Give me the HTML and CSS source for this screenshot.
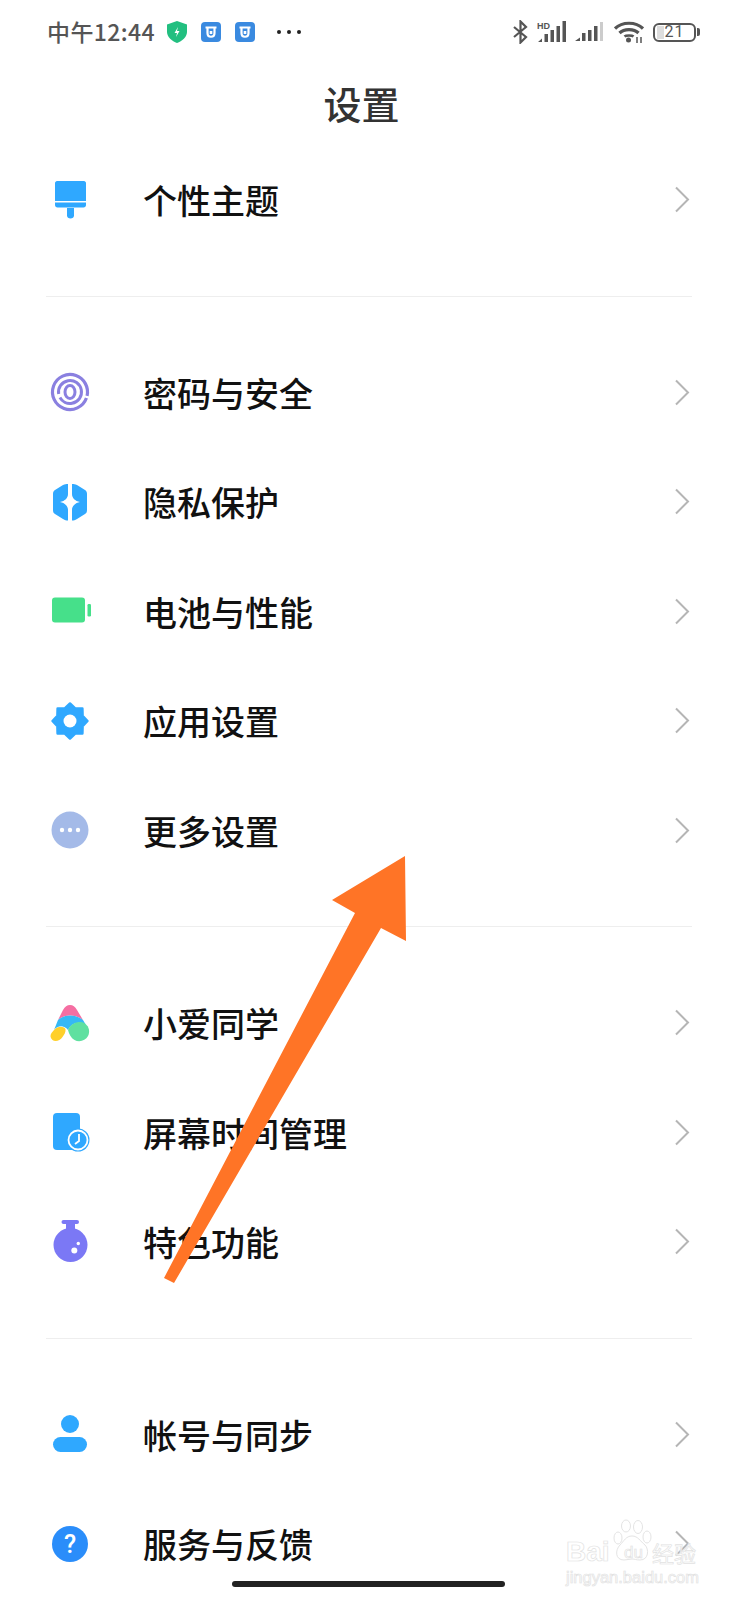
FILE: index.html
```html
<!DOCTYPE html>
<html lang="zh-CN">
<head>
    <meta charset="UTF-8">
    <meta name="viewport" content="width=device-width, initial-scale=1.0">
    <title>设置</title>
    <link rel="stylesheet" href="styles.css">
</head>
<body>
<div class="screen">

    <!-- Status bar -->
    <div class="status-bar">
        <div class="status-left">
            <span class="time">中午12:44</span>
            <svg class="shield" width="20" height="22" viewBox="0 0 20 22"><path d="M10 0L20 3.500V11C20 16 15 20 10 22C5 20 0 16 0 11V3.500Z" fill="#22bf80"/><path d="M11 6L7.500 12H10L9 16L12.500 10H10Z" fill="#fff"/></svg>
            <svg class="app-badge" width="20" height="20" viewBox="0 0 20 20"><rect width="20" height="20" rx="4" fill="#3a8ae0"/><path d="M4.500 5.500H15.500M6.500 5.500V11C6.500 16 13.500 16 13.500 11V5.500" fill="none" stroke="#fff" stroke-width="2.200"/><rect x="8.700" y="9" width="2.600" height="3" fill="#fff"/></svg>
            <svg class="app-badge" width="20" height="20" viewBox="0 0 20 20"><rect width="20" height="20" rx="4" fill="#3a8ae0"/><path d="M4.500 5.500H15.500M6.500 5.500V11C6.500 16 13.500 16 13.500 11V5.500" fill="none" stroke="#fff" stroke-width="2.200"/><rect x="8.700" y="9" width="2.600" height="3" fill="#fff"/></svg>
            <span class="status-dots"><i></i><i></i><i></i></span>
        </div>
        <div class="status-right">
            <svg width="15" height="24" viewBox="0 0 15 24"><path d="M1 7L13 17L7.500 22.500V1.500L13 7L1 17" fill="none" stroke="#555" stroke-width="2.200"/></svg>
            <svg width="29" height="22" viewBox="0 0 29 22"><path d="M1 21L5 17.500V21ZM7.500 13H11V21H7.500ZM13.500 9H17V21H13.500ZM19.500 5H23V21H19.500ZM25.500 0H29V21H25.500Z" fill="#555"/><text class="hd" x="0" y="8">HD</text></svg>
            <svg width="28" height="20" viewBox="0 0 28 20"><path d="M0 19L5 15.500V19ZM7 11H10.500V19H7ZM13 8H16.500V19H13ZM19 4H22.500V19H19Z" fill="#555"/><rect x="25" y="0" width="3" height="19" fill="#ccc"/></svg>
            <svg class="wifi" width="30" height="22" viewBox="0 0 30 22"><path d="M1 7.500C8 0.500 22 0.500 29 7.500M5.500 12C10 7.500 20 7.500 24.500 12" fill="none" stroke="#555" stroke-width="3.200"/><path d="M10.500 15.500C12 14 18 14 19.500 15.500" fill="none" stroke="#555" stroke-width="2.500"/><circle cx="14.500" cy="19" r="2.500" fill="#555"/><path d="M23 16V22M27 16V22" stroke="#555" stroke-width="1.500"/></svg>
            <div class="battery"><div class="battery-body"><span class="battery-level"></span><span class="battery-num">21</span></div><span class="battery-nub"></span></div>
        </div>
    </div>

    <h1 class="page-title">设置</h1>

    <section class="group">
        <div class="row">
            <svg class="icon" width="40" height="40" viewBox="0 0 40 40"><path d="M5 3C5 2 6 1 7 1H34C35 1 36 2 36 3V21H5Z" fill="#2fa8ff"/><path d="M5 22.500H36V25C36 26.500 35 27.500 33.500 27.500H7.500C6 27.500 5 26.500 5 25Z" fill="#2fa8ff"/><path d="M17 28H24V35.500C24 37.500 22.500 38.500 20.500 38.500C18.500 38.500 17 37.500 17 35.500Z" fill="#2fa8ff"/></svg>
            <span class="row-label">个性主题</span>
            <svg class="chevron" width="16" height="27" viewBox="0 0 16 27"><path d="M2 1.500L14 13.500L2 25.500"/></svg>
        </div>
    </section>

    <section class="group">
        <div class="row">
            <svg class="icon" width="40" height="40" viewBox="0 0 40 40"><g fill="none" stroke="#8a80e0"><circle cx="20" cy="20" r="17.500" stroke-width="3.200" stroke-dasharray="107 3" transform="rotate(20 20 20)"/><circle cx="20" cy="20" r="11.500" stroke-width="3" stroke-dasharray="68 4" transform="rotate(170 20 20)"/><ellipse cx="20" cy="20" rx="5" ry="6.500" stroke-width="3"/></g></svg>
            <span class="row-label">密码与安全</span>
            <svg class="chevron" width="16" height="27" viewBox="0 0 16 27"><path d="M2 1.500L14 13.500L2 25.500"/></svg>
        </div>
        <div class="row">
            <svg class="icon" width="40" height="40" viewBox="0 0 40 40"><path d="M18 2V12C18 16 15 19 10 20C15 21 18 24 18 28V38.500C16 38.500 15 38 13 37L5 32C3.500 31 3 30 3 28V12C3 10 3.500 9 5 8L13 3C15 2 16 2 18 2Z" fill="#2fa8ff"/><path d="M22 2V12C22 16 25 19 30 20C25 21 22 24 22 28V38.500C24 38.500 25 38 27 37L35 32C36.500 31 37 30 37 28V12C37 10 36.500 9 35 8L27 3C25 2 24 2 22 2Z" fill="#2fa8ff"/></svg>
            <span class="row-label">隐私保护</span>
            <svg class="chevron" width="16" height="27" viewBox="0 0 16 27"><path d="M2 1.500L14 13.500L2 25.500"/></svg>
        </div>
        <div class="row">
            <svg class="icon" width="40" height="40" viewBox="0 0 40 40"><rect x="2" y="6.500" width="33" height="25" rx="3" fill="#46e08a"/><rect x="37.500" y="13" width="3.500" height="12.500" rx="1.200" fill="#46e08a"/></svg>
            <span class="row-label">电池与性能</span>
            <svg class="chevron" width="16" height="27" viewBox="0 0 16 27"><path d="M2 1.500L14 13.500L2 25.500"/></svg>
        </div>
        <div class="row">
            <svg class="icon" width="40" height="40" viewBox="0 0 40 40"><polygon points="20,2.500 25.200,7.400 32.400,7.600 32.600,14.800 37.500,20 32.600,25.200 32.400,32.400 25.200,32.600 20,37.500 14.800,32.600 7.600,32.400 7.400,25.200 2.500,20 7.400,14.800 7.600,7.600 14.800,7.400" fill="#2fa8ff" stroke="#2fa8ff" stroke-width="2.500" stroke-linejoin="round"/><circle cx="20" cy="20" r="6.500" fill="#fff"/></svg>
            <span class="row-label">应用设置</span>
            <svg class="chevron" width="16" height="27" viewBox="0 0 16 27"><path d="M2 1.500L14 13.500L2 25.500"/></svg>
        </div>
        <div class="row">
            <svg class="icon" width="40" height="40" viewBox="0 0 40 40"><circle cx="20" cy="20" r="18.500" fill="#a4bae8"/><g fill="#fff"><circle cx="12" cy="20" r="2.200"/><circle cx="20" cy="20" r="2.200"/><circle cx="28" cy="20" r="2.200"/></g></svg>
            <span class="row-label">更多设置</span>
            <svg class="chevron" width="16" height="27" viewBox="0 0 16 27"><path d="M2 1.500L14 13.500L2 25.500"/></svg>
        </div>
    </section>

    <section class="group">
        <div class="row">
            <svg class="icon" width="40" height="40" viewBox="0 0 40 40"><path d="M20 2C17 2 15 3.500 13 7L8 17C15 11 25 11 33 17L27 7C25 3.500 23 2 20 2Z" fill="#f56ea2"/><path d="M8 17C15 11 25 11 33 17L36 22C28 17 21 21 18 27C14 22 8 22 4 27Z" fill="#35b8f5"/><path d="M18 27C21 20 29 17 35 20.500C39.500 24 40 29 38 33C35.500 38 29 39.500 24.500 37C21 35 19 31 18 27Z" fill="#5fe0a0"/><path d="M4 27C8 23 13 23 15.500 26C16 29 14 32 12.500 34C10 38 5 39 2.500 37C0 35 0 32 1.500 30Z" fill="#ffd02a"/></svg>
            <span class="row-label">小爱同学</span>
            <svg class="chevron" width="16" height="27" viewBox="0 0 16 27"><path d="M2 1.500L14 13.500L2 25.500"/></svg>
        </div>
        <div class="row">
            <svg class="icon" width="40" height="40" viewBox="0 0 40 40"><rect x="3" y="1" width="27" height="37" rx="4" fill="#2fa8ff"/><circle cx="28" cy="28" r="11.500" fill="#2fa8ff"/><circle cx="28" cy="28" r="9.500" fill="#2fa8ff" stroke="#fff" stroke-width="1.800"/><path d="M29 22V29L25 32" fill="none" stroke="#fff" stroke-width="1.800"/></svg>
            <span class="row-label">屏幕时间管理</span>
            <svg class="chevron" width="16" height="27" viewBox="0 0 16 27"><path d="M2 1.500L14 13.500L2 25.500"/></svg>
        </div>
        <div class="row">
            <svg class="icon" width="40" height="44" viewBox="0 0 40 44"><rect x="11.500" y="0" width="17.500" height="4" rx="2" fill="#7b78f5"/><rect x="16" y="2" width="9" height="12" fill="#7b78f5"/><circle cx="20.500" cy="25" r="17" fill="#7b78f5"/><circle cx="24.300" cy="30.500" r="3" fill="#fff"/><circle cx="28.300" cy="23.500" r="1.700" fill="#fff"/></svg>
            <span class="row-label">特色功能</span>
            <svg class="chevron" width="16" height="27" viewBox="0 0 16 27"><path d="M2 1.500L14 13.500L2 25.500"/></svg>
        </div>
    </section>

    <section class="group group-last">
        <div class="row">
            <svg class="icon" width="40" height="40" viewBox="0 0 40 40"><circle cx="20" cy="10" r="9" fill="#2fa8ff"/><rect x="3" y="23" width="34" height="15" rx="7.500" fill="#2fa8ff"/></svg>
            <span class="row-label">帐号与同步</span>
            <svg class="chevron" width="16" height="27" viewBox="0 0 16 27"><path d="M2 1.500L14 13.500L2 25.500"/></svg>
        </div>
        <div class="row">
            <svg class="icon" width="40" height="40" viewBox="0 0 40 40"><circle cx="20" cy="20" r="18" fill="#2a8dfa"/><text class="help-mark" x="20" y="29">?</text></svg>
            <span class="row-label">服务与反馈</span>
            <svg class="chevron" width="16" height="27" viewBox="0 0 16 27"><path d="M2 1.500L14 13.500L2 25.500"/></svg>
        </div>
    </section>

    <!-- Overlays -->
    <div class="watermark">
        <svg class="paw" width="40" height="44" viewBox="0 0 40 44"><g fill="rgba(255,255,255,0.7)" stroke="#e4e4e4" stroke-width="1"><ellipse cx="6" cy="19" rx="4" ry="6"/><ellipse cx="14" cy="7" rx="4.500" ry="6"/><ellipse cx="26" cy="8" rx="4.500" ry="6.500"/><ellipse cx="35" cy="18" rx="4" ry="6"/><path d="M20 17C26 17 28 22 33 26C37 30 37 41 28 41C24 41 23 40 20 40C17 40 15 41 12 41C3 41 3 31 8 26C12 22 14 17 20 17Z"/></g></svg>
        <span class="wm-bai">Bai</span>
        <span class="wm-du">du</span>
        <span class="wm-jy">经验</span>
        <span class="wm-url">jingyan.baidu.com</span>
    </div>

    <svg class="arrow" width="738" height="1600" viewBox="0 0 738 1600"><polygon points="405,856 332,900 355,913 164,1278 174,1283 381,928 406,941" fill="#ff7426"/></svg>

    <div class="home-bar"></div>
</div>
</body>
</html>
```

FILE: styles.css
```css
/* General Page Styles */
html, body {
    margin: 0;
    padding: 0;
    background-color: #fff;
}

.screen {
    position: relative;
    width: 738px;
    height: 1600px;
    overflow: hidden;
    background-color: #fff;
    font-family: "Noto Sans CJK SC", "Noto Sans", sans-serif;
}

/* Status bar */
.status-bar {
    display: flex;
    justify-content: space-between;
    align-items: center;
    height: 64px;
    padding: 0 38px 0 47px;
    box-sizing: border-box;
    color: #555;
}

.status-left, .status-right {
    display: flex;
    align-items: center;
}

.status-right {
    gap: 9px;
}

.wifi {
    margin-left: 2px;
}

.time {
    position: relative;
    top: -1px;
    font-size: 23px;
    font-weight: 500;
    letter-spacing: 0.4px;
    margin-right: 12px;
}

.app-badge {
    margin-left: 14px;
}

.status-dots {
    display: flex;
    gap: 6px;
    margin-left: 22px;
}

.status-dots i {
    width: 4px;
    height: 4px;
    border-radius: 50%;
    background-color: #222;
}

.hd {
    font-family: "Liberation Sans", sans-serif;
    font-size: 9px;
    font-weight: bold;
    fill: #555;
}

.battery {
    display: flex;
    align-items: center;
    gap: 1px;
}

.battery-body {
    position: relative;
    display: flex;
    align-items: center;
    justify-content: center;
    width: 39px;
    height: 15px;
    border: 2.5px solid #555;
    border-radius: 6px;
    overflow: hidden;
}

.battery-level {
    position: absolute;
    left: 2px;
    top: 1px;
    bottom: 1px;
    width: 7px;
    background-color: #ddd;
}

.battery-num {
    position: relative;
    font-family: "Roboto", sans-serif;
    font-size: 16px;
    letter-spacing: 1px;
    line-height: 16px;
}

.battery-nub {
    width: 3px;
    height: 8px;
    border-radius: 0 2px 2px 0;
    background-color: #555;
}

/* Title */
.page-title {
    display: flex;
    justify-content: center;
    align-items: center;
    height: 81px;
    margin: 0;
    padding: 0 15px 4px 0;
    box-sizing: border-box;
    font-size: 38px;
    font-weight: 500;
    color: #333;
}

/* Setting groups */
.group {
    margin: 0 46px 41px;
    padding-bottom: 41px;
    border-bottom: 1px solid #eee;
}

.group-last {
    border-bottom: none;
    margin-bottom: 0;
    padding-bottom: 0;
}

.row {
    display: flex;
    align-items: center;
    height: 109.5px;
}

.icon {
    flex: none;
    margin-left: 4px;
    overflow: visible;
}

.row-label {
    flex: 1;
    margin-left: 53px;
    font-size: 34px;
    font-weight: 500;
    color: #111;
}

.chevron {
    flex: none;
    margin-right: 2px;
}

.chevron path {
    fill: none;
    stroke: #b5b5b5;
    stroke-width: 2;
}

.help-mark {
    font-family: "Roboto", sans-serif;
    font-size: 25px;
    font-weight: 500;
    fill: #fff;
    text-anchor: middle;
}

/* Overlays */
.arrow {
    position: absolute;
    left: 0;
    top: 0;
}

.home-bar {
    position: absolute;
    left: 232px;
    top: 1581px;
    width: 273px;
    height: 6px;
    border-radius: 3px;
    background-color: #222;
}

.watermark {
    position: absolute;
    left: 560px;
    top: 1515px;
    width: 150px;
    height: 75px;
    font-family: "Liberation Sans", sans-serif;
    color: rgba(255, 255, 255, 0.75);
    -webkit-text-stroke: 0.7px #e2e2e2;
}

.watermark span {
    position: absolute;
}

.paw {
    position: absolute;
    left: 52px;
    top: 4px;
}

.wm-bai {
    left: 6px;
    top: 21px;
    font-size: 28px;
    font-weight: bold;
}

.wm-du {
    left: 64px;
    top: 28px;
    font-size: 17px;
}

.wm-jy {
    left: 92px;
    top: 22px;
    font-family: "Noto Sans CJK SC", sans-serif;
    font-size: 22px;
    line-height: 30px;
}

.wm-url {
    left: 6px;
    top: 53px;
    font-size: 16.5px;
}
```
